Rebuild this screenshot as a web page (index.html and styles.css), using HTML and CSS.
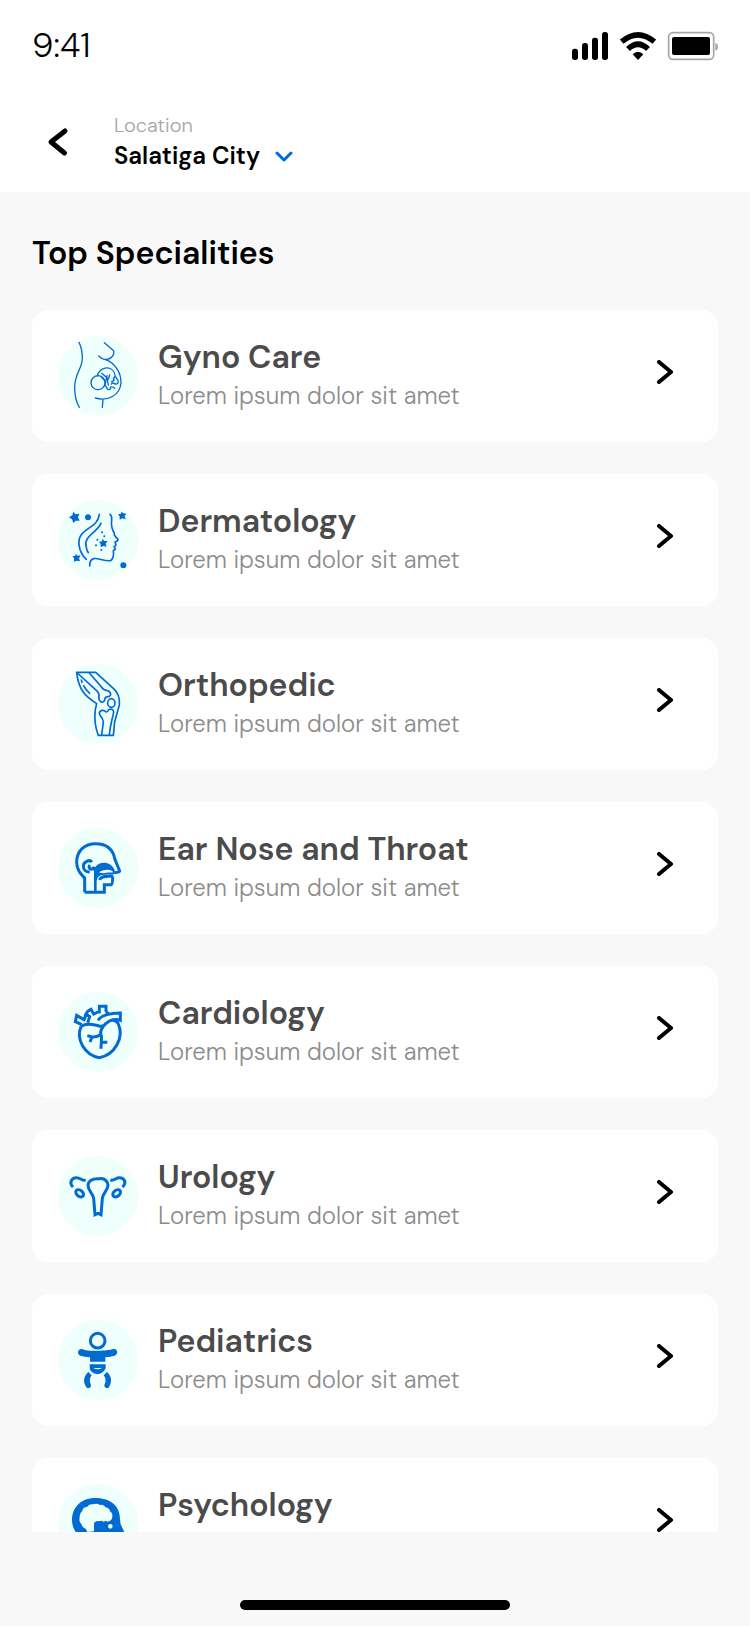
FILE: index.html
```html
<!DOCTYPE html>
<html lang="en">
<head>
<meta charset="utf-8">
<meta name="viewport" content="width=device-width, initial-scale=1">
<title>Top Specialities</title>
<link rel="stylesheet" href="styles.css">
</head>
<body>
<header class="top">
  <div class="status">
    <span class="time">9:41</span>
    <svg class="status-icons" viewBox="66 63 438 90" aria-hidden="true">
      <rect x="66" y="116" width="18" height="34" rx="8"/>
      <rect x="96" y="99" width="18" height="51" rx="8"/>
      <rect x="126" y="83" width="18" height="67" rx="8"/>
      <rect x="156" y="66" width="18" height="84" rx="8"/>
      <g fill="none" stroke="#000" stroke-width="17">
        <path d="M215 95Q264 54 313 95"/>
        <path d="M234 117Q264 89 294 117"/>
      </g>
      <path d="M248 133Q264 118 280 133L264 150Z"/>
      <rect x="356" y="68" width="135" height="80" rx="13" fill="none" stroke="#a6a6a6" stroke-width="5"/>
      <rect x="366" y="81" width="114" height="54" rx="6"/>
      <path d="M496 99Q504 101 504 111Q504 120 496 122Z" fill="#a6a6a6"/>
    </svg>
  </div>
  <div class="nav">
    <button class="back" type="button" aria-label="Back">
      <svg class="back-icon" viewBox="0 0 20 28"><path d="M18 4L4 15L17.500 26"/></svg>
    </button>
    <div class="location">
      <span class="location-label" id="loc">Location</span>
      <button class="city" type="button" aria-describedby="loc">Salatiga City
        <svg class="down-icon" viewBox="0 0 18 12"><path d="M2 3L9 10L16 3"/></svg>
      </button>
    </div>
  </div>
</header>

<main class="content">
  <h1 class="title">Top Specialities</h1>
  <ul class="list">
    <li><a class="card" href="#gyno">
      <svg class="badge thin" viewBox="24 33 240 240" aria-hidden="true"><path d="M87 52C94 67 97 82 97 98C97 132 74 145 74 187C74 211 78 231 88 247"/><path d="M163 53L191 77C194 96 177 105 163 103C155 101 150 97 146 93"/><path d="M166 104C193 112 214 143 213 174C210 211 173 230 136 219M159 223L157 247"/><circle cx="144" cy="173" r="21"/><path d="M142 153C147 124 191 117 196 154L204 166Q207 178 195 177Q189 171 184 177M155 145L171 158Q173 168 175 180M171 152L165 180L173 193Q183 196 181 187Q187 183 194 190M179 150L175 162M196 154Q188 159 192 166L185 170M154 156L162 164"/></svg>
      <span class="text"><span class="name">Gyno Care</span><span class="desc">Lorem ipsum dolor sit amet</span></span>
      <svg class="go" viewBox="0 0 18 24" aria-hidden="true"><path d="M3 2L15 12L3 22"/></svg>
    </a></li>
    <li><a class="card" href="#dermatology">
      <svg class="badge mid" viewBox="24 30 240 240" aria-hidden="true"><path d="M148 73C144 119 82 112 87 164C89 184 98 198 109 208M153 100C139 130 99 138 109 172Q110 181 115 188"/><path d="M180 73Q186 77 185 89C183 107 185 118 193 129Q190 135 204 148Q204 154 195 156L198 166L192 170L196 177L190 182C192 196 189 207 182 212C161 214 144 203 131 206Q119 209 119 228"/><g class="solid"><path d="M70 65L76 73L88 71L84 82L89 92L77 92L70 99L66 88L57 82L67 76Z"/><path d="M215 65L220 70L229 71L224 78L227 88L217 85L209 89L209 79L204 73L213 71Z"/><path d="M77 191L83 197L92 196L87 205L90 214L80 212L72 215L72 205L67 199L76 197Z"/><path d="M157 146L163 153L173 153L167 161L170 170L160 168L152 172L152 162L147 156L156 154Z"/><circle cx="114" cy="82" r="9"/><circle cx="220" cy="226" r="9"/><circle cx="156" cy="127" r="3"/><circle cx="163" cy="139" r="3"/><circle cx="142" cy="149" r="3"/><circle cx="138" cy="166" r="3"/><circle cx="154" cy="180" r="3"/></g></svg>
      <span class="text"><span class="name">Dermatology</span><span class="desc">Lorem ipsum dolor sit amet</span></span>
      <svg class="go" viewBox="0 0 18 24" aria-hidden="true"><path d="M3 2L15 12L3 22"/></svg>
    </a></li>
    <li><a class="card" href="#orthopedic">
      <svg class="badge mid" viewBox="24 27 240 240" aria-hidden="true"><path d="M80 52H137L190 100C205 113 210 131 208 150Q201 175 194 200L190 241H145C134 213 132 193 136 164L140 146C106 124 86 106 80 52Z"/><path d="M82 54L143 110Q150 119 146 128C149 145 164 146 165 130Q167 125 178 124Q187 117 176 108C167 107 158 103 152 93L118 54"/><ellipse cx="184" cy="144" rx="11" ry="13"/><path d="M155 240L160 202C160 188 148 184 148 174C150 163 163 165 168 171Q172 172 176 164Q190 159 191 171C188 191 181 205 178 240"/><path d="M94 75L96 82M101 92Q108 106 119 115"/></svg>
      <span class="text"><span class="name">Orthopedic</span><span class="desc">Lorem ipsum dolor sit amet</span></span>
      <svg class="go" viewBox="0 0 18 24" aria-hidden="true"><path d="M3 2L15 12L3 22"/></svg>
    </a></li>
    <li><a class="card" href="#ent">
      <svg class="badge bold" viewBox="24 24 240 240" aria-hidden="true"><path d="M104 217H163V194H184Q188 192 188 170M104 217V174C89 161 80 147 80 127C80 92 104 71 137 71C173 71 190 91 195 119L209 153Q209 157 193 158"/><path d="M126 126C118 117 100 125 100 139C100 149 107 156 119 156M119 135C115 142 119 149 127 147"/><path d="M149 180C151 172 158 168 190 168"/><path class="solid" fill-rule="evenodd" d="M128 139L136 141C148 124 182 122 194 150V162C178 166 160 161 148 168Q141 173 140 182V217H132V152L124 148ZM147 157C157 149 176 146 187 153Q190 156 187 158C172 156 160 163 147 157Z"/></svg>
      <span class="text"><span class="name">Ear Nose and Throat</span><span class="desc">Lorem ipsum dolor sit amet</span></span>
      <svg class="go" viewBox="0 0 18 24" aria-hidden="true"><path d="M3 2L15 12L3 22"/></svg>
    </a></li>
    <li><a class="card" href="#cardiology">
      <svg class="badge bold" viewBox="24 21 240 240" aria-hidden="true"><path d="M93 125C77 163 104 210 148 218C195 209 223 157 205 117Q202 108 189 106M93 125C106 112 128 118 141 121Q152 126 163 121M189 104C176 106 154 122 151 146"/><path d="M95 119L76 110L80 91L106 106M113 113L119 95L108 87L113 79L123 73L131 87L141 82L148 81V64H168V78L178 90M108 87L103 104M144 106C153 92 180 84 211 84V106Q199 102 187 105"/><path d="M152 144C158 160 153 169 153 191M151 149Q140 157 126 156L112 152M126 156L120 171M155 172H172"/></svg>
      <span class="text"><span class="name">Cardiology</span><span class="desc">Lorem ipsum dolor sit amet</span></span>
      <svg class="go" viewBox="0 0 18 24" aria-hidden="true"><path d="M3 2L15 12L3 22"/></svg>
    </a></li>
    <li><a class="card" href="#urology">
      <svg class="badge bold" viewBox="24 33 240 240" aria-hidden="true"><path d="M135 209L131 160C129 145 114 139 114 121C116 98 142 101 149 101C166 99 174 112 174 121C172 140 159 144 157 160L153 209L144 205Z"/><path d="M107 106C94 107 91 98 80 98C65 97 56 114 69 126M181 105C194 108 197 98 208 98C223 98 232 114 217 126"/><ellipse cx="89" cy="145" rx="13" ry="9" transform="rotate(38 89 145)"/><ellipse cx="200" cy="145" rx="13" ry="9" transform="rotate(-38 200 145)"/></svg>
      <span class="text"><span class="name">Urology</span><span class="desc">Lorem ipsum dolor sit amet</span></span>
      <svg class="go" viewBox="0 0 18 24" aria-hidden="true"><path d="M3 2L15 12L3 22"/></svg>
    </a></li>
    <li><a class="card" href="#pediatrics">
      <svg class="badge bold" viewBox="24 30 240 240" aria-hidden="true"><circle cx="143" cy="92" r="22"/><path class="solid" d="M96 117C111 123 125 122 143 122C164 122 177 121 190 117C203 115 206 132 194 137Q182 140 166 142V155H120V142Q102 140 91 137C79 132 84 115 96 117Z"/><path class="solid" fill-rule="evenodd" d="M119 163H167V174C164 184 153 192 143 192C132 192 119 184 119 174ZM130 174L156 174Q144 182 130 174Z"/><path class="solid" d="M115 186L125 196Q115 208 122 222Q125 232 117 234H111C99 219 99 200 115 186ZM171 186L161 196Q171 208 164 222Q161 232 169 234H175C186 219 187 200 171 186Z"/></svg>
      <span class="text"><span class="name">Pediatrics</span><span class="desc">Lorem ipsum dolor sit amet</span></span>
      <svg class="go" viewBox="0 0 18 24" aria-hidden="true"><path d="M3 2L15 12L3 22"/></svg>
    </a></li>
    <li><a class="card" href="#psychology">
      <svg class="badge" viewBox="24 42 240 240" aria-hidden="true"><path class="solid" fill-rule="evenodd" d="M97 252V205C77 192 66 172 66 151C66 111 94 84 135 84C176 84 209 102 210 147L212 163L222 184L214 196V226H174V252ZM112 186L132 184V159Q139 151 147 154L154 152L161 155L166 152L172 155Q188 152 187 138Q188 127 181 125Q177 113 167 112Q161 102 150 105Q140 98 129 103Q118 101 112 110Q98 111 97 123Q87 130 89 144Q86 156 94 162Q98 174 107 176ZM181 162A7 7 0 1 0 181 176A7 7 0 1 0 181 162Z"/></svg>
      <span class="text"><span class="name">Psychology</span><span class="desc">Lorem ipsum dolor sit amet</span></span>
      <svg class="go" viewBox="0 0 18 24" aria-hidden="true"><path d="M3 2L15 12L3 22"/></svg>
    </a></li>
  </ul>
</main>

<footer class="home"><span class="home-bar"></span></footer>
</body>
</html>
```
FILE: styles.css
```css
* { box-sizing: border-box; }

body {
  margin: 0;
  height: 100vh;
  display: flex;
  flex-direction: column;
  background: #f8f8f8;
  color: #000;
  font-family: "DM Sans", Inter, "Liberation Sans", sans-serif;
  font-optical-sizing: none;
}

button {
  padding: 0;
  border: 0;
  background: none;
  color: inherit;
  font: inherit;
  font-optical-sizing: none;
  cursor: pointer;
}

svg { display: block; flex: none; }

.top { flex: none; background: #fff; }

.status {
  display: flex;
  align-items: center;
  justify-content: space-between;
  height: 92px;
  padding: 0 32px;
}

.time { font-size: 34px; font-weight: 300; line-height: 40px; }
.status-icons { width: 146px; height: 30px; }

.nav {
  display: flex;
  align-items: center;
  gap: 32px;
  padding: 18px 32px 20px;
}

.back {
  display: flex;
  align-items: center;
  justify-content: center;
  width: 50px;
  height: 50px;
}

.back-icon {
  width: 20px;
  height: 28px;
  fill: none;
  stroke: #000;
  stroke-width: 5;
  stroke-linecap: round;
  stroke-linejoin: round;
  overflow: visible;
}

.location { display: flex; flex-direction: column; align-items: flex-start; }

.location-label {
  color: #a6a6a6;
  font-size: 20px;
  font-weight: 300;
  line-height: 30px;
}

.city {
  display: flex;
  align-items: center;
  gap: 15px;
  font-size: 24px;
  font-weight: 600;
  line-height: 32px;
}

.down-icon {
  width: 18px;
  height: 12px;
  fill: none;
  stroke: #006bd6;
  stroke-width: 3;
  stroke-linecap: round;
  stroke-linejoin: round;
}

.content {
  flex: 1;
  min-height: 0;
  padding: 40px 32px 0;
  overflow-y: auto;
  scrollbar-width: none;
}

.title {
  margin: 0 0 36px;
  font-size: 32px;
  font-weight: 600;
  line-height: 42px;
}

.list {
  display: flex;
  flex-direction: column;
  gap: 32px;
  margin: 0;
  padding: 0;
  list-style: none;
}

.card {
  display: flex;
  align-items: flex-start;
  gap: 20px;
  padding: 26px;
  border-radius: 16px;
  background: #fff;
  color: inherit;
  text-decoration: none;
}

.badge {
  width: 80px;
  height: 80px;
  border-radius: 50%;
  background: #effffc;
  fill: none;
  stroke: #006bd0;
  stroke-width: 4;
  stroke-linecap: round;
  stroke-linejoin: round;
}

.thin { stroke-width: 4; }
.mid { stroke-width: 5; }
.bold { stroke-width: 9; stroke-linecap: butt; stroke-linejoin: miter; }
.solid { fill: #006bd0; stroke: none; }

.text { flex: 1; display: flex; flex-direction: column; min-width: 0; }

.name {
  color: #4b4b4b;
  font-size: 32px;
  font-weight: 600;
  line-height: 42px;
}

.desc {
  color: #8c8c8c;
  font-size: 24px;
  font-weight: 300;
  line-height: 36px;
}

.go {
  width: 18px;
  height: 24px;
  margin: 24px 18px 0 0;
  fill: none;
  stroke: #000;
  stroke-width: 4;
  stroke-linecap: round;
  stroke-linejoin: round;
}

.home {
  flex: none;
  display: flex;
  align-items: flex-end;
  justify-content: center;
  height: 94px;
  padding-bottom: 16px;
}

.home-bar {
  width: 36%;
  height: 10px;
  border-radius: 5px;
  background: #000;
}
```
